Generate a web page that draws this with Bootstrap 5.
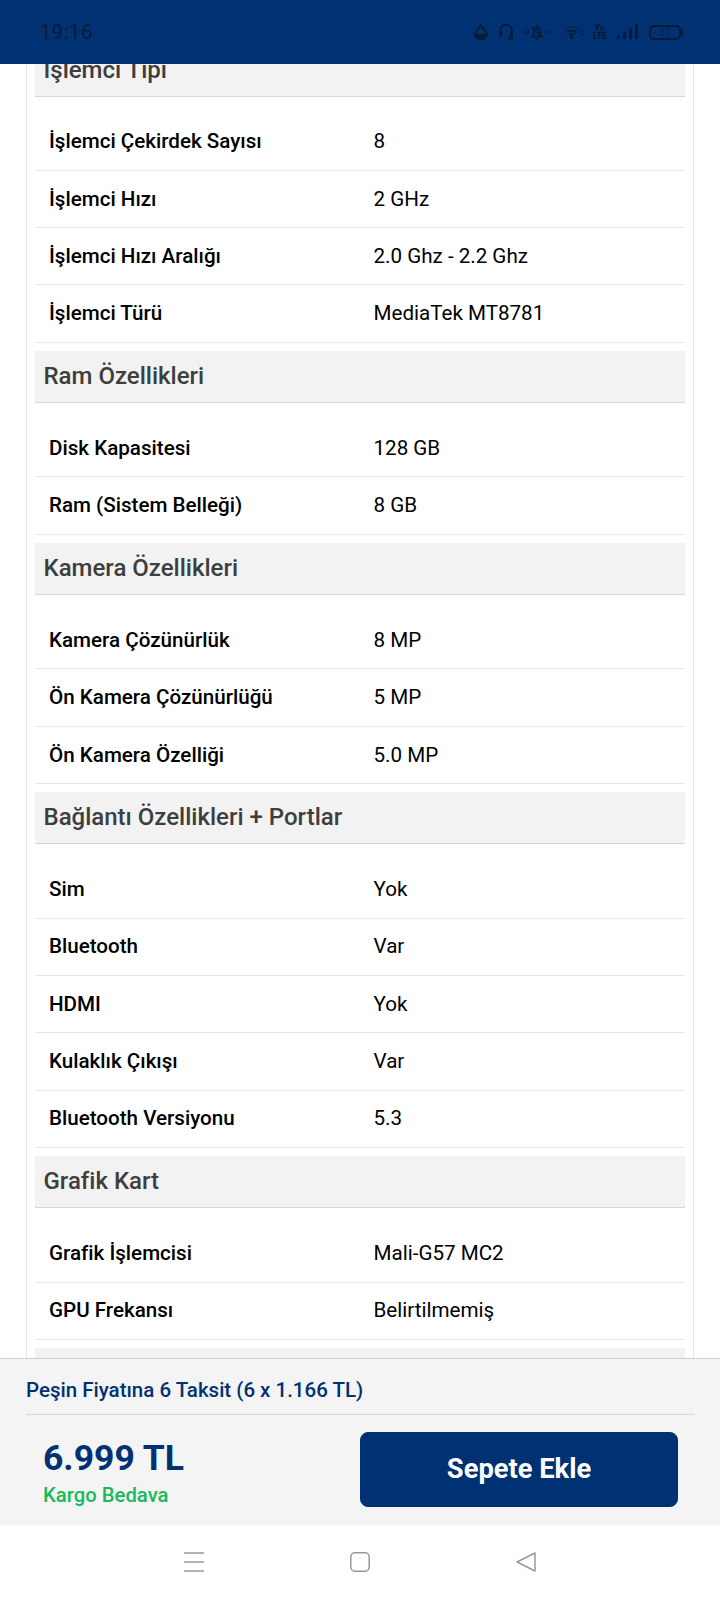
<!doctype html>
<html lang="tr">
<head>
<meta charset="utf-8">
<title>Ürün Özellikleri</title>
<link href="https://cdn.jsdelivr.net/npm/bootstrap@5.3.0/dist/css/bootstrap.min.css" rel="stylesheet">
<style>
html,body{height:1600px;margin:0;overflow:hidden;background:#fff;font-family:Roboto,"Liberation Sans",sans-serif}
.phone{width:720px;height:1600px}
.status-strip{height:64px;flex:none;background:#003173;color:#0a1a36;padding:0 39px 0 40px}
.status-time{font-size:20px;font-weight:400;letter-spacing:.6px;line-height:1}
.status-icons svg{display:block;flex:none}
.gap-a{margin-right:10px}
.gap-b{margin-right:13px}
.gap-c{margin-right:9px}
.gap-d{margin-right:11px}
.volte{width:13px;font-size:8.5px;line-height:8px;font-weight:900;text-align:center;color:#0a1a36}
.batt{width:32px;height:15px;border:2px solid #0a1a36;border-radius:5px;font-size:10.5px;line-height:11px;text-align:center;font-weight:300;position:relative;color:#0a1a36}
.batt::after{content:"";position:absolute;right:-4px;top:3px;width:2px;height:6px;background:#0a1a36;border-radius:0 2px 2px 0}
.spec-view{flex:1 1 0;min-height:0;overflow:hidden;padding:0 26px}
.spec-sheet{margin-top:-19.5px;border-left:1px solid #e6e6ea;border-right:1px solid #e6e6ea;padding:0 8px;background:#fff}
.spec-title{height:52px;background:#f2f2f2;border-bottom:1px solid #d6d6d6;color:#3e3e3e;font-size:24px;font-weight:500;padding:0 8.500px;line-height:50px;margin:0}
.spec-group{padding-bottom:8.33px}
.spec-rows{padding-top:17px}
.spec-line{height:57.33px;border-bottom:1px solid #e8e8e8;font-size:20.6px;color:#000;padding-left:14px}
.spec-name{width:324.5px;flex:none;font-weight:500}
.buy-bar{flex:none;height:167px;background:#f4f4f4;border-top:1px solid #cfcfcf;padding:0 25px 0 26px}
.buy-note{height:56px;border-bottom:1px solid #d8d8d8;color:#003173;font-size:20.5px;font-weight:500;line-height:1;padding-top:7px}
.buy-price{padding-left:17px;padding-top:8px;width:334px;flex:none;gap:9px}
.buy-amount{color:#003173;font-size:35.5px;font-weight:700;line-height:1}
.buy-cargo{color:#18b95c;font-size:20.3px;font-weight:500;line-height:1}
.buy-btn{width:318px;height:75px;background:#003173;border-color:#003173;color:#fff;font-size:27.3px;font-weight:700;border-radius:8px;margin:1px 17px 0 0}
.buy-btn:hover{background:#003173;color:#fff}
.nav-strip{flex:none;height:75px;padding-bottom:1px;gap:146px}
</style>
</head>
<body>
<div class="phone d-flex flex-column">
  <div class="status-strip d-flex align-items-center justify-content-between">
    <span class="status-time">19:16</span>
    <div class="status-icons d-flex align-items-center">
      <svg width="14" height="16" viewBox="0 0 14 16" class="gap-a" fill="none" stroke="#0a1a36" stroke-width="2"><path d="M7 1.5C4.5 5 1.3 7.5 1.3 10.2a5.7 5 0 0 0 11.4 0C12.700 7.500 9.500 5 7 1.500Z"/><path d="M2 10h10v1a5 4 0 0 1-10 0Z" fill="#0a1a36" stroke="none"/></svg>
      <svg width="16" height="16" viewBox="0 0 16 16" class="gap-a" fill="none" stroke="#0a1a36" stroke-width="1.800"><path d="M2 10V7a6 6 0 0 1 12 0v3"/><rect x="1" y="7.500" width="3" height="5" rx="1.200" fill="#0a1a36" stroke="none"/><rect x="12" y="7.500" width="3" height="5" rx="1.200" fill="#0a1a36" stroke="none"/><path d="M14 12v2.500H9"/></svg>
      <svg width="26" height="16" viewBox="0 0 26 16" class="gap-b" fill="none" stroke="#0a1a36" stroke-width="1.600"><path d="M7 12.500h12M9 12.500c1-2 1-3.500 1-5.500a3 3 0 0 1 6 0c0 2 0 3.500 1 5.500M8 3l10 10M13 1v2"/><path d="M11.500 15h3M1 7v2M4 6v4M22 6v4M25 7v2"/></svg>
      <svg width="21" height="14" viewBox="0 0 21 14" class="gap-c" fill="none" stroke="#0a1a36" stroke-width="2"><path d="M1 4.500a12 12 0 0 1 15 0" stroke-opacity=".35"/><path d="M3.500 7.500a8 8 0 0 1 10 0"/><path d="M6.200 10a4 4 0 0 1 4.600 0"/><circle cx="8.500" cy="12.500" r="1.500" fill="#0a1a36" stroke="none"/><path d="M18 6l2 0-1-2ZM18 9l2 0-1 2Z" stroke-width="1"/></svg>
      <div class="volte gap-d"><div>Yo</div><div>LTE</div></div>
      <svg width="21" height="16" viewBox="0 0 21 16" class="gap-d" fill="#0a1a36"><rect x="0" y="11" width="3" height="4" rx=".5"/><rect x="6" y="8" width="3" height="7" rx=".5"/><rect x="12" y="4" width="3" height="11" rx=".5"/><rect x="18" y="0" width="3" height="15" rx=".5"/></svg>
      <div class="batt">67</div>
    </div>
  </div>

  <div class="spec-view">
    <div class="spec-sheet">
      <section class="spec-group">
        <h2 class="spec-title">İşlemci Tipi</h2>
        <div class="spec-rows">
          <div class="spec-line d-flex align-items-center"><span class="spec-name">İşlemci Çekirdek Sayısı</span><span>8</span></div>
          <div class="spec-line d-flex align-items-center"><span class="spec-name">İşlemci Hızı</span><span>2 GHz</span></div>
          <div class="spec-line d-flex align-items-center"><span class="spec-name">İşlemci Hızı Aralığı</span><span>2.0 Ghz - 2.2 Ghz</span></div>
          <div class="spec-line d-flex align-items-center"><span class="spec-name">İşlemci Türü</span><span>MediaTek MT8781</span></div>
        </div>
      </section>
      <section class="spec-group">
        <h2 class="spec-title">Ram Özellikleri</h2>
        <div class="spec-rows">
          <div class="spec-line d-flex align-items-center"><span class="spec-name">Disk Kapasitesi</span><span>128 GB</span></div>
          <div class="spec-line d-flex align-items-center"><span class="spec-name">Ram (Sistem Belleği)</span><span>8 GB</span></div>
        </div>
      </section>
      <section class="spec-group">
        <h2 class="spec-title">Kamera Özellikleri</h2>
        <div class="spec-rows">
          <div class="spec-line d-flex align-items-center"><span class="spec-name">Kamera Çözünürlük</span><span>8 MP</span></div>
          <div class="spec-line d-flex align-items-center"><span class="spec-name">Ön Kamera Çözünürlüğü</span><span>5 MP</span></div>
          <div class="spec-line d-flex align-items-center"><span class="spec-name">Ön Kamera Özelliği</span><span>5.0 MP</span></div>
        </div>
      </section>
      <section class="spec-group">
        <h2 class="spec-title">Bağlantı Özellikleri + Portlar</h2>
        <div class="spec-rows">
          <div class="spec-line d-flex align-items-center"><span class="spec-name">Sim</span><span>Yok</span></div>
          <div class="spec-line d-flex align-items-center"><span class="spec-name">Bluetooth</span><span>Var</span></div>
          <div class="spec-line d-flex align-items-center"><span class="spec-name">HDMI</span><span>Yok</span></div>
          <div class="spec-line d-flex align-items-center"><span class="spec-name">Kulaklık Çıkışı</span><span>Var</span></div>
          <div class="spec-line d-flex align-items-center"><span class="spec-name">Bluetooth Versiyonu</span><span>5.3</span></div>
        </div>
      </section>
      <section class="spec-group">
        <h2 class="spec-title">Grafik Kart</h2>
        <div class="spec-rows">
          <div class="spec-line d-flex align-items-center"><span class="spec-name">Grafik İşlemcisi</span><span>Mali-G57 MC2</span></div>
          <div class="spec-line d-flex align-items-center"><span class="spec-name">GPU Frekansı</span><span>Belirtilmemiş</span></div>
        </div>
      </section>
      <section class="spec-group">
        <div class="spec-title"></div>
      </section>
    </div>
  </div>

  <div class="buy-bar">
    <div class="buy-note d-flex align-items-center">Peşin Fiyatına 6 Taksit (6 x 1.166 TL)</div>
    <div class="d-flex align-items-center pt-3">
      <div class="buy-price d-flex flex-column">
        <div class="buy-amount">6.999 TL</div>
        <div class="buy-cargo">Kargo Bedava</div>
      </div>
      <button type="button" class="btn buy-btn d-flex align-items-center justify-content-center">Sepete Ekle</button>
    </div>
  </div>

  <div class="nav-strip d-flex align-items-center justify-content-center">
    <svg width="20" height="20" viewBox="0 0 20 20" fill="none" stroke="#999" stroke-width="1.500"><path d="M0 1h20M0 10h20M0 19h20"/></svg>
    <svg width="20" height="20" viewBox="0 0 20 20" fill="none" stroke="#999" stroke-width="1.500"><rect x=".8" y=".8" width="18.400" height="18.400" rx="4"/></svg>
    <svg width="20" height="20" viewBox="0 0 20 20" fill="none" stroke="#999" stroke-width="1.500" stroke-linejoin="round"><path d="M19 1v18L1 10Z"/></svg>
  </div>
</div>
<script src="https://cdn.jsdelivr.net/npm/bootstrap@5.3.0/dist/js/bootstrap.bundle.min.js"></script>
</body>
</html>
